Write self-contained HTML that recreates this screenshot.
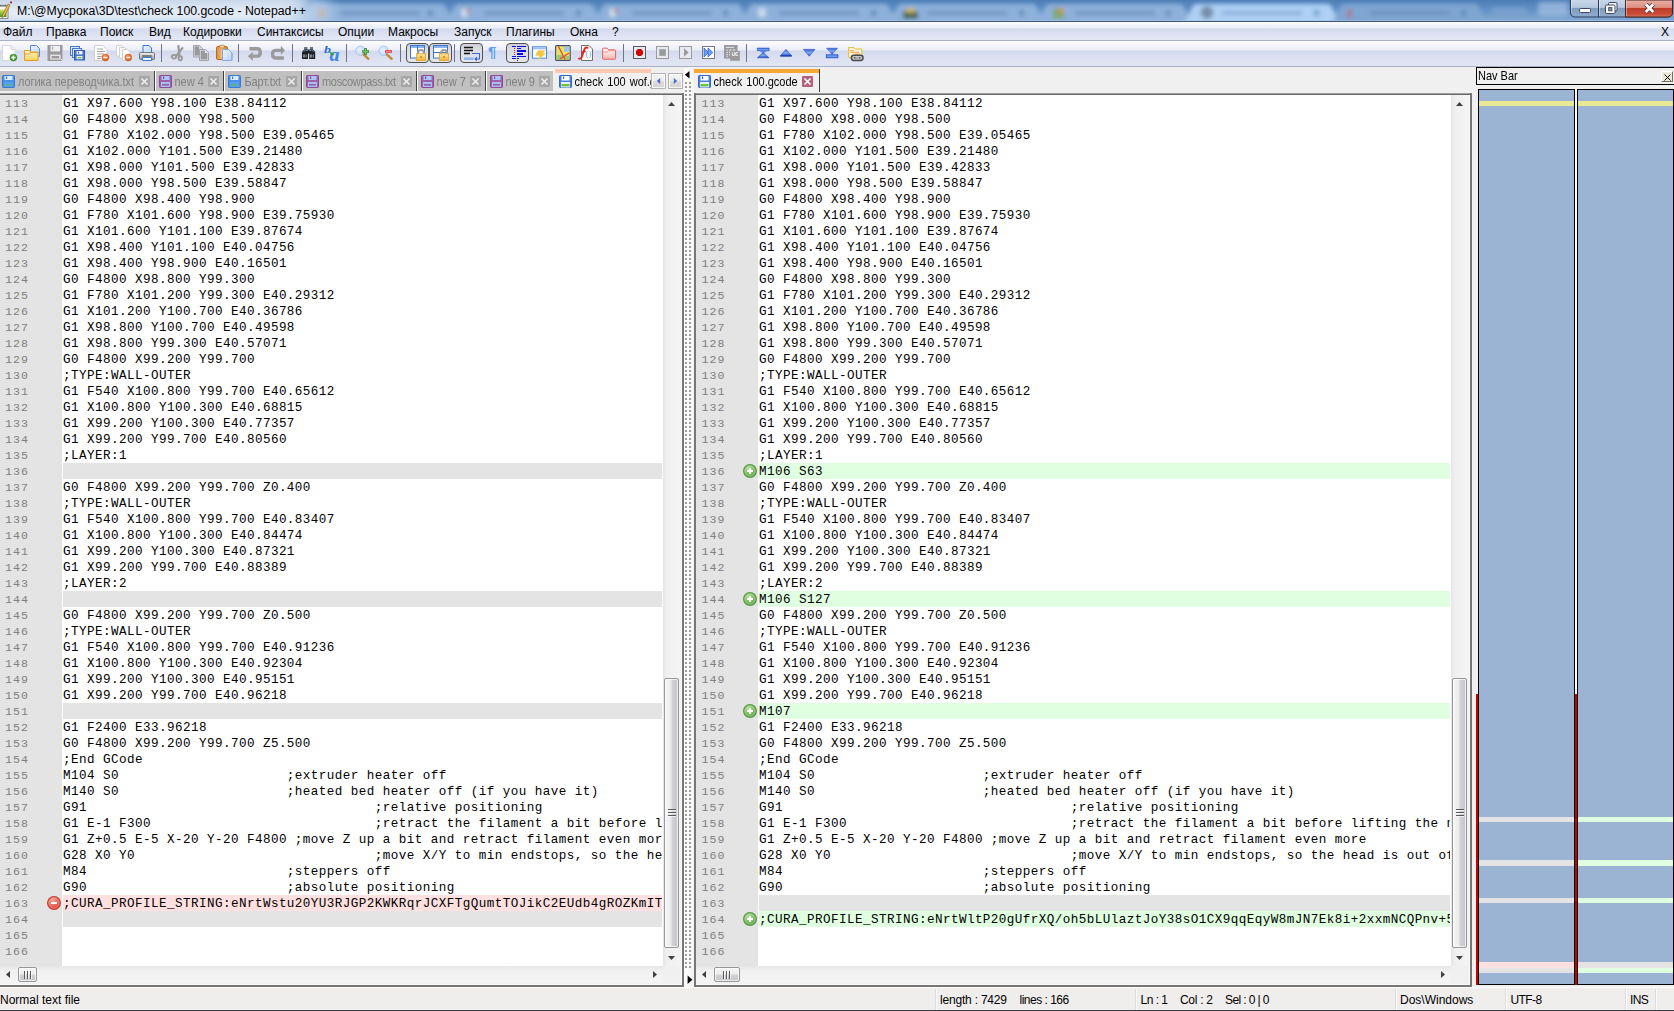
<!DOCTYPE html>
<html lang="ru">
<head>
<meta charset="utf-8">
<title>M:\@Мусрока\3D\test\check 100.gcode - Notepad++</title>
<style>
*{box-sizing:border-box;margin:0;padding:0}
html,body{width:1674px;height:1011px;overflow:hidden;background:#f0f0f0}
body{position:relative;font-family:"Liberation Sans",sans-serif;font-size:12px;color:#000}
.abs{position:absolute}
svg{display:block;overflow:visible}
/* title bar */
#title{left:0;top:0;width:1674px;height:22px;overflow:hidden;background:#5b89bd}
#ttext{left:17px;top:3px;font-size:12.3px;line-height:16px;white-space:nowrap;color:#000}
/* menu */
#menu{left:0;top:22px;width:1674px;height:19px;background:linear-gradient(180deg,#ffffff 0,#f4f6fc 12%,#e9edf8 35%,#d3d9ed 37%,#dde2f2 70%,#e3e7f5 100%);border-bottom:1px solid #a9b1c9}
#menu span{position:absolute;top:2px;line-height:16px;font-size:12px;white-space:nowrap}
/* toolbar */
#tool{left:0;top:41px;width:1674px;height:26px;background:linear-gradient(180deg,#ffffff 0,#f6f8fd 10%,#ebeef8 37%,#d3d9ed 39%,#dce1f1 70%,#e1e5f3 100%);border-bottom:1px solid #a9b1c9}
#tool .sep{position:absolute;top:3px;width:1px;height:18px;background:#6e7385}
#tool .ic{position:absolute}
#tool .pb{position:absolute;top:2px;width:23px;height:20px;border:1.3px solid #505050;border-radius:4px;background:linear-gradient(180deg,#cfd0d6 0,#dcdde2 30%,#e4e5ea 100%)}
/* tab area */
.tab{position:absolute;top:71px;height:20px;background:#c0c0c0;color:#808080;font-size:11px;line-height:14px;white-space:nowrap}
.tab.brd{border-right:1px solid #404040}
.tab .t{position:absolute;top:4px;transform:scaleY(1.1);transform-origin:0 11px}
.tab .x{position:absolute;top:5px;width:11px;height:11px;background:#a6a6a6;border-radius:1px}
.tab .fi{position:absolute;top:4px}
.tabhi{position:absolute;top:70px;height:1px;background:#fff}
.atab{position:absolute;top:69px;height:23px;background:#f0f0f0;font-size:11px;line-height:14px;white-space:nowrap;color:#000;overflow:hidden}
/* editor panes */
.pane{position:absolute;overflow:hidden;background:#fff;font-family:"Liberation Mono",monospace;font-size:12.600px;letter-spacing:.438px;line-height:16px}
.ln{position:relative;height:16px;white-space:pre}
.ln .no{position:absolute;left:0;top:0;height:16px;background:#e4e4e4;color:#808080;padding-top:1.300px;font-size:11.600px;letter-spacing:1.038px}
.ln .tx{position:absolute;top:0;height:16px;color:#000;padding-top:1px;overflow:hidden}
.ln .mk{position:absolute;top:1px}
.ln.blank .tx{background:#e4e4e4}
.ln.add .tx{background:#e0ffe0}
.ln.del .tx{background:#ffe0e0}
#lp{left:0;top:95px;width:662px;height:871px}
#lp .no{width:62px;padding-left:5px}
#lp .tx{left:63px;width:599px;padding-left:0}
#lp .mk{left:47px}
#rp{left:696px;top:95px;width:754px;height:871px}
#rp .no{width:62px;padding-left:5.500px}
#rp .tx{left:63px;width:691px;padding-left:0}
#rp .mk{left:47px}
.marg{background:#e4e4e4}
/* scrollbars */
.vs{position:absolute;width:17px;background:linear-gradient(90deg,#e6e6e6 0,#f0f0f0 25%,#f4f4f4 100%)}
.hs{position:absolute;height:17px;background:linear-gradient(180deg,#e6e6e6 0,#f0f0f0 25%,#f4f4f4 100%)}
.vth{position:absolute;left:1px;width:15px;border:1px solid #979797;border-radius:2px;background:linear-gradient(90deg,#f6f6f6 0,#ececec 45%,#d2d2d6 55%,#c4c4ca 100%);box-shadow:inset 0 0 0 1px rgba(255,255,255,.7)}
.hth{position:absolute;top:1px;height:15px;border:1px solid #979797;border-radius:2px;background:linear-gradient(180deg,#f6f6f6 0,#ececec 45%,#d2d2d6 55%,#c4c4ca 100%);box-shadow:inset 0 0 0 1px rgba(255,255,255,.7)}
.corner{position:absolute;width:17px;height:17px;background:#f0f0f0}
/* status */
#status{left:0;top:988px;width:1674px;height:23px;background:#f0eded;font-size:12px}
#status span{position:absolute;top:4px;line-height:16px;white-space:nowrap}
#status i{position:absolute;top:1px;width:2px;height:21px;background:#dedcdc;border-right:1px solid #fafafa}
</style>
</head>
<body>
<svg width="0" height="0" style="position:absolute">
<defs>
 <linearGradient id="lgBlue" x1="0" y1="0" x2="0" y2="1"><stop offset="0" stop-color="#2c56d0"/><stop offset=".5" stop-color="#7fb0f4"/><stop offset="1" stop-color="#1f49c4"/></linearGradient>
 <linearGradient id="lgFold" x1="0" y1="0" x2="0" y2="1"><stop offset="0" stop-color="#fff3c4"/><stop offset="1" stop-color="#fbd25a"/></linearGradient>
 <linearGradient id="lgPage" x1="0" y1="0" x2="1" y2="1"><stop offset="0" stop-color="#eef5ff"/><stop offset="1" stop-color="#b9d4f8"/></linearGradient>
 <linearGradient id="lgLock" x1="0" y1="0" x2="0" y2="1"><stop offset="0" stop-color="#fde9a0"/><stop offset="1" stop-color="#f2b030"/></linearGradient>
 <linearGradient id="lgClip" x1="0" y1="0" x2="1" y2="0"><stop offset="0" stop-color="#d48a38"/><stop offset=".5" stop-color="#f0c080"/><stop offset="1" stop-color="#c87828"/></linearGradient>
 <linearGradient id="lgPr" x1="0" y1="0" x2="0" y2="1"><stop offset="0" stop-color="#f4f4f4"/><stop offset="1" stop-color="#9a9a9a"/></linearGradient>
 <linearGradient id="lgRedF" x1="0" y1="0" x2="0" y2="1"><stop offset="0" stop-color="#fff"/><stop offset="1" stop-color="#f4b4b0"/></linearGradient>
 <radialGradient id="gG" cx="0.4" cy="0.3" r="0.8"><stop offset="0" stop-color="#b5e09a"/><stop offset="1" stop-color="#4f9e3a"/></radialGradient>
 <radialGradient id="gR" cx="0.4" cy="0.3" r="0.8"><stop offset="0" stop-color="#f7a59a"/><stop offset="1" stop-color="#d83226"/></radialGradient>
 <radialGradient id="gO" cx="0.4" cy="0.3" r="0.8"><stop offset="0" stop-color="#f8a060"/><stop offset="1" stop-color="#d84a10"/></radialGradient>
 <radialGradient id="gLens" cx="0.4" cy="0.4" r="0.7"><stop offset="0" stop-color="#eaf3ff"/><stop offset="1" stop-color="#b8d4f6"/></radialGradient>

 <g id="ic-plus"><circle cx="7" cy="7" r="6.300" fill="url(#gG)" stroke="#4f9a3e" stroke-width="1.300"/><circle cx="7" cy="7" r="5.200" fill="none" stroke="#fff" stroke-width=".5" opacity=".55"/><path d="M7 4v6M4 7h6" stroke="#fff" stroke-width="2" fill="none"/></g>
 <g id="ic-minus"><circle cx="7" cy="7" r="6.300" fill="url(#gR)" stroke="#cc3a30" stroke-width="1.300"/><circle cx="7" cy="7" r="5.200" fill="none" stroke="#fff" stroke-width=".5" opacity=".55"/><path d="M4 7h6" stroke="#fff" stroke-width="2" fill="none"/></g>

 <!-- toolbar icons, 16x16 -->
 <g id="t-new"><path d="M1.5 .5h8.5l4 4v11h-12.5z" fill="#fff" stroke="#d8d8d8"/><path d="M10 .5v4h4" fill="#f0f0f0" stroke="#d8d8d8"/><circle cx="12.4" cy="12.6" r="3.4" fill="#3a9a2a" stroke="#2a7a20" stroke-width=".6"/><path d="M12.4 10.4v4.4M10.2 12.6h4.4" stroke="#fff" stroke-width="1.5"/></g>
 <g id="t-open"><path d="M6.5 .5h6l3 3v8h-9z" fill="url(#lgPage)" stroke="#5a8ad8"/><path d="M.5 15.5v-10h5l1 1.5h7.5v8.5z" fill="url(#lgFold)" stroke="#e89a28"/><path d="M1 9h4.5l1-1.5h7" fill="none" stroke="#e89a28" stroke-width=".8"/></g>
 <g id="t-save"><path d="M.5 0h15v14.8l-1.2 1.2H.5z" fill="#9a9a9a"/><rect x="3.5" y=".8" width="9.5" height="5.6" fill="#f0f0f4"/><rect x="5.2" y="1.8" width="1" height="3" fill="#9a9a9a"/><rect x="3.2" y="9.6" width="10.4" height="5" fill="#e6e6ea"/><rect x="4.6" y="11" width="7.6" height="2.4" fill="#9a9a9a"/><rect x="14" y="14" width="1" height="1" fill="#fff"/></g>
 <g id="t-saveall"><rect x=".5" y="1.5" width="9" height="9" fill="#dce8fa" stroke="#4a78c8"/><rect x="2.5" y="3.5" width="9" height="9" fill="#dce8fa" stroke="#4a78c8"/><rect x="4.5" y="5.5" width="10" height="9.5" fill="#4a78c8" stroke="#2f5cb0"/><rect x="6.5" y="6" width="6" height="3.4" fill="#e8f0ff"/><rect x="8" y="6.8" width="1" height="1.6" fill="#2f5cb0"/><rect x="6.5" y="11" width="6" height="3.2" fill="#e8f0ff"/><rect x="7.5" y="12" width="4" height="1.4" fill="#78c040"/></g>
 <g id="t-close"><path d="M1.5 .5h8.5l4 4v11h-12.5z" fill="#fff" stroke="#d0d0d0"/><path d="M4 4h6M4 6.5h8M4 9h7M4 11.5h5M4 13.5h4" stroke="#a8a8a8" stroke-width="1"/><circle cx="12.4" cy="12.5" r="3.4" fill="url(#gO)" stroke="#c84810" stroke-width=".5"/><path d="M10.4 12.5h4" stroke="#fff" stroke-width="1.4"/></g>
 <g id="t-closeall"><path d="M.5 .5h5l2 2v8.5h-7z" fill="#fff" stroke="#d0d0d0"/><path d="M3.5 2.5h5l2 2v8.5h-7z" fill="#fff" stroke="#d0d0d0"/><path d="M6.5 4.5h5l2.500 2.500v8.500h-7.500z" fill="#fff" stroke="#d0d0d0"/><circle cx="12.3" cy="12.5" r="3.4" fill="url(#gO)" stroke="#c84810" stroke-width=".5"/><path d="M10.300 12.500h4" stroke="#fff" stroke-width="1.400"/></g>
 <g id="t-print"><path d="M4 .5h6l2.500 2.500v5h-8.500z" fill="url(#lgPage)" stroke="#3a78d8"/><path d="M1.500 7.500q-1 0-1 1.500v4.500q0 1 1 1h13q1 0 1-1v-4.500q0-1.500-1-1.500z" fill="url(#lgPr)" stroke="#606060" stroke-width=".8"/><rect x="3.200" y="10.200" width="9.600" height="1.600" fill="#6a6a6a"/><path d="M3.500 12.500h9v3h-9z" fill="#f4f8ff" stroke="#3a78d8"/></g>
 <g id="t-cut"><path d="M8.300 .2l1.300 11.400M13 2.400l-6.700 8.600" stroke="#9a9a9a" stroke-width="2.200" fill="none"/><ellipse cx="4" cy="11.800" rx="2.200" ry="1.800" fill="none" stroke="#9a9a9a" stroke-width="1.900"/><ellipse cx="10.300" cy="13.300" rx="1.700" ry="2.100" fill="none" stroke="#9a9a9a" stroke-width="1.900"/></g>
 <g id="t-copy"><path d="M.5 .5h6l3 3v8.500h-9z" fill="#d4d7e2" stroke="#a4a4a8"/><path d="M1.600 1.600h4.400v2.500h2.400v6.300h-6.800z" fill="#9a9a9a"/><path d="M6.500 4.500h6l3 3v8h-9z" fill="#e4e8f2" stroke="#a4a4a8"/><path d="M7.600 5.600h4.400v2.500h2.400v6.300h-6.800z" fill="#9a9a9a"/></g>
 <g id="t-paste"><rect x=".5" y="1.500" width="11" height="13" rx="1.200" fill="url(#lgClip)" stroke="#b86a20"/><rect x="3.500" y=".3" width="5" height="2.600" rx=".8" fill="#f4d8a0" stroke="#b86a20" stroke-width=".7"/><path d="M6.500 4.500h6l3.500 3.500v7.500h-9.500z" fill="url(#lgPage)" stroke="#3a70d0"/><path d="M6.500 4.500h6l3.500 3.500v7.500h-9.500z" fill="none" stroke="#fff" stroke-width=".4"/></g>
 <g id="t-undo"><path d="M2.500 3.700h8q2.700 0 2.700 3.700t-2.700 3.700h-5" fill="none" stroke="#9a9a9a" stroke-width="3.400"/><path d="M.8 11.300l5-4.200v8.600z" fill="#9a9a9a"/></g>
 <g id="t-redo"><path d="M11.500 5.400h-6q-3 0-3 3.800t3 3.800h8.400" fill="none" stroke="#9a9a9a" stroke-width="3.300"/><path d="M15 5.400l-4.200-4.600v9z" fill="#9a9a9a"/></g>
 <g id="t-find"><path d="M3.600 2h2.600v2.600h3v-2.600h2.400l.2 2.600 1.600 1.200.8 2v6.200h-6v-5.600h-1.200v5.600h-6v-6.200l.8-2 1.600-1.200z" fill="#1c1f24"/><rect x="3.600" y="2" width="2.600" height="2.400" fill="#687280"/><rect x="9.200" y="2" width="2.400" height="2.400" fill="#687280"/><path d="M2.400 6.300q2.200-1.700 4.600-.7M8.200 5.600q2.600-1 4.600.7" stroke="#6f93c0" stroke-width=".9" fill="none"/><rect x="2.300" y="9.500" width="1.400" height="3" fill="#b0b8c0"/><rect x="4.600" y="9.500" width="1.300" height="3" fill="#7c848c"/><rect x="9.300" y="9.500" width="1.400" height="3" fill="#b0b8c0"/><rect x="11.600" y="9.500" width="1.300" height="3" fill="#7c848c"/></g>
 <g id="t-zoomin"><circle cx="5.500" cy="5.800" r="4.700" fill="url(#gLens)" stroke="#a8c4ec" stroke-width=".9"/><path d="M8.600 9.400l4.800 4.400" stroke="#c08a3a" stroke-width="2.400" stroke-linecap="round"/><path d="M10.600 3v7M7.100 6.500h7" stroke="#2f8a2f" stroke-width="2.600"/><path d="M10.600 3.700v5.600M7.800 6.500h5.600" stroke="#7cc86a" stroke-width="1"/></g>
 <g id="t-zoomout"><circle cx="5.600" cy="5.800" r="4.700" fill="url(#gLens)" stroke="#a8c4ec" stroke-width=".9"/><path d="M8.800 9.400l4.800 4.400" stroke="#c08a3a" stroke-width="2.400" stroke-linecap="round"/><rect x="7" y="5" width="7" height="2.800" rx=".4" fill="#e8323c"/><rect x="7.800" y="5.800" width="5.400" height="1" fill="#f8a0a4"/></g>
 <g id="t-win1"><rect x=".5" y=".5" width="14" height="12.500" fill="#fff" stroke="#3f74cc"/><rect x="1" y="1" width="13" height="2" fill="#8ab4ee"/><path d="M7.500 1v12" stroke="#3f74cc"/></g>
 <g id="t-win2"><rect x=".5" y=".5" width="14" height="12.500" fill="#fff" stroke="#3f74cc"/><rect x="1" y="1" width="13" height="2" fill="#8ab4ee"/><path d="M1 7.500h13" stroke="#3f74cc"/></g>
 <g id="t-lock"><path d="M2.200 5.500v-1.800q0-2.700 2.800-2.700t2.800 2.700v1.800" fill="none" stroke="#9c9c9c" stroke-width="2"/><rect x=".4" y="4.800" width="9.200" height="6.600" fill="url(#lgLock)" stroke="#e8a020" stroke-width=".8"/><rect x="4.400" y="7" width="1.200" height="2" fill="#b87818"/></g>
 <g id="t-wrap"><path d="M1 1.500h9M1 4.500h9M1 7.500h6" stroke="#111" stroke-width="1.400"/><path d="M9 7.500h7.500v5.500h-3" fill="none" stroke="#3a6ad0" stroke-width="1.100"/><path d="M11.200 13l2.800-2.600v5.200z" fill="#3a6ad0"/><rect x="1" y="11.400" width="9.600" height="2.600" fill="#8ab8f4"/></g>
 <g id="t-indent"><g shape-rendering="crispEdges" fill="#0a0af8"><rect x="2" y="1" width="4" height="1"/><rect x="7" y="1" width="9" height="1"/><rect x="7" y="3" width="4" height="1"/><rect x="7" y="5" width="9" height="2"/><rect x="7" y="8" width="6" height="2"/><rect x="2" y="11" width="4" height="1"/><rect x="7" y="11" width="9" height="1"/><rect x="2" y="13" width="4" height="1"/><rect x="7" y="13" width="2" height="1"/><rect x="7" y="15" width="1" height="1"/><g fill="#f01818"><rect x="4" y="3" width="1" height="1"/><rect x="4" y="5" width="1" height="1"/><rect x="4" y="7" width="1" height="1"/><rect x="4" y="9" width="1" height="1"/></g></g></g>
 <g id="t-udl"><rect x=".5" y="1.800" width="14" height="11.400" fill="#fff" stroke="#4a86dc" stroke-width="1"/><rect x="1" y="2.300" width="13" height="2" fill="#9cc0f0"/><path d="M6 5.500h7l-2.500 3h3l-7.500 6.500 2-4.500h-4.500z" fill="#f4c23c" stroke="#f0d060" stroke-width=".5"/></g>
 <g id="t-map"><rect x=".6" y=".6" width="14.600" height="14.800" rx="1" fill="#e4e070" stroke="#4a4a70" stroke-width="1.100"/><rect x="9" y="1.600" width="5.400" height="5.400" fill="#9ec4f0"/><path d="M1.400 10h6.500v4.600h-6.500z" fill="#98cc70"/><path d="M9 11h5v3.600h-5z" fill="#98cc70"/><path d="M3.500 1.500l6.500 13M14 8l-9 6" stroke="#f04030" stroke-width="1.300"/><path d="M6 1.500l3 7 5-2" stroke="#f0f040" stroke-width=".8" fill="none"/></g>
 <g id="t-func"><path d="M3.500 .5h7.500l3.500 3.500v11.500h-11z" fill="#fffdf6" stroke="#707070"/><path d="M9.600 2.800q-2.200-.8-3.200 1.600l-2.800 8q-.8 1.600-2.600 1.200" fill="none" stroke="#e82028" stroke-width="1.900" stroke-linecap="round"/><path d="M3.200 7.200l4.600-.8" stroke="#e82028" stroke-width="1.400"/><path d="M9.600 6.500q-1 0-1 1v1.400q0 .6-.8.600.8 0 .8.600v1.400q0 1 1 1M11.400 6.500q1 0 1 1v1.400q0 .6.800.6-.8 0-.8.600v1.400q0 1-1 1" fill="none" stroke="#7ab0e0" stroke-width=".9"/></g>
 <g id="t-folder"><path d="M.6 13.500v-9.500q0-.8.800-.8h3.800l1.200 1.600h6.400q.8 0 .8.800v7.900q0 .7-.8.700h-11.400q-.8 0-.8-.7z" fill="url(#lgRedF)" stroke="#e06060" stroke-width="1"/><path d="M1.200 7h4l1-1.200h7.200" fill="none" stroke="#e88a88" stroke-width=".9"/></g>
 <g id="t-rec"><rect x=".5" y=".5" width="12" height="12" fill="#e6e8f2" stroke="#5a5a5a"/><path d="M5 3h3l2 2v3l-2 2h-3l-2-2v-3z" fill="#cc0000"/></g>
 <g id="t-stop"><rect x=".5" y=".5" width="12" height="12" fill="#e6e8f2" stroke="#9a9a9a"/><rect x="3.200" y="3.200" width="6.600" height="6.600" fill="#9a9a9a"/></g>
 <g id="t-play"><rect x=".5" y=".5" width="12" height="12" fill="#e6e8f2" stroke="#9a9a9a"/><path d="M5 2.200l4.600 4.300-4.600 4.300z" fill="#9a9a9a"/></g>
 <g id="t-multi"><rect x=".5" y=".5" width="12" height="12" fill="#fff" stroke="#7a7a7a"/><path d="M2 2l4.600 4.500-4.600 4.500z" fill="#6aa0f0" stroke="#1f55d0" stroke-width=".7"/><path d="M6 2l4.800 4.500-4.800 4.500z" fill="#6aa0f0" stroke="#1f55d0" stroke-width=".7"/></g>
 <g id="t-savemacro"><rect x="0" y="0" width="13.600" height="13.600" fill="#9a9a9a"/><path d="M1.800 2.400h8.200" stroke="#e6e8f0" stroke-width="1"/><path d="M2.400 5h1.400M5 5h2.600M8.600 5h2.600M2.400 7.400h1.400M2.400 9.600h1.400M2.400 11.800h1.400M5 7.400h1.400M5 9.600h1.400" stroke="#e6e8f0" stroke-width="1.100"/><rect x="6.200" y="6" width="9.600" height="9.800" fill="#9a9a9a"/><path d="M8.400 7.400v3h2.200v-3M14 7.600h-2.200v2.800h2.200" fill="none" stroke="#f0f0f4" stroke-width="1"/></g>
 <g id="t-first"><path d="M.2 0h12v2.600h-12z" fill="url(#lgBlue)" stroke="#1f45c0" stroke-width=".5"/><path d="M1.600 2.600h9.200l-4.600 3z" fill="#5a8eea"/><path d="M6.200 4.600l5.800 5.200h-11.600z" fill="url(#lgBlue)" stroke="#1f45c0" stroke-width=".6"/></g>
 <g id="t-up"><path d="M6 .4l5.800 6.600h-11.600z" fill="url(#lgBlue)" stroke="#1f45c0" stroke-width=".6"/><path d="M.2 7h11.600" stroke="#1436b4" stroke-width="1"/></g>
 <g id="t-down"><path d="M.4 .4h11.600l-5.800 6.800z" fill="url(#lgBlue)" stroke="#2a52c8" stroke-width=".6"/></g>
 <g id="t-last"><path d="M.6 .2h11l-5.500 6z" fill="url(#lgBlue)" stroke="#2a52c8" stroke-width=".5"/><rect x=".3" y="6.800" width="11.600" height="3" fill="#6a9cf0" stroke="#1f45c0" stroke-width=".8"/></g>
 <g id="t-flink"><path d="M.6 10.400v-9.800h5.400l1 1.400h6.800v8.400z" fill="#fff4e0" stroke="#dcc030" stroke-width="1"/><path d="M2 3.600h4M2 5.400h9M7 7.200h5" stroke="#f8b060" stroke-width="1.300"/><rect x="3.400" y="8.200" width="11.600" height="5.200" rx="2.400" fill="#c8c8c8" stroke="#484848" stroke-width="1.500"/><path d="M6 10.800h6.400" stroke="#484848" stroke-width="1.400"/><path d="M7.400 10.800h3.600" stroke="#fff" stroke-width=".8"/></g>
 <g id="t-replace"><text x="0" y="7.800" font-family="Liberation Serif, serif" font-style="italic" font-weight="bold" font-size="11" fill="#2a6ade" textLength="7" lengthAdjust="spacingAndGlyphs">b</text><text x="5.400" y="15.600" font-family="Liberation Serif, serif" font-style="italic" font-weight="bold" font-size="19" fill="#3a86ec" textLength="10" lengthAdjust="spacingAndGlyphs">a</text><path d="M5 6.200l3.200 3" stroke="#2fa040" stroke-width="1.500"/><path d="M9.800 10.600l-3.800-.6 3.200-3z" fill="#2fa040"/></g>
 <!-- tab floppy icons 13x13 -->
 <g id="f-blue"><rect x=".5" y=".5" width="12" height="12" rx=".8" fill="#4a90e8" stroke="#3878d0"/><rect x="2.500" y="1" width="8" height="4" fill="#dcecff"/><rect x="4" y="1.500" width="1.200" height="2.500" fill="#3878d0"/><rect x="2" y="7" width="9" height="5" fill="#5aa0f0"/><rect x="3" y="9" width="7" height="2" fill="#58b090"/></g>
 <g id="f-purple"><rect x=".5" y=".5" width="12" height="12" rx=".8" fill="#a060a8" stroke="#904898"/><rect x="2.500" y="1" width="8" height="4" fill="#a8c8f8"/><rect x="4" y="1.500" width="1.200" height="2.500" fill="#904898"/><rect x="2" y="7" width="9" height="5" fill="#a8c0f0"/><rect x="3" y="9" width="7" height="1.600" fill="#9060a8"/></g>
 <g id="f-active"><rect x=".5" y=".5" width="12" height="12" rx=".8" fill="#4a80e0" stroke="#3468c8"/><rect x="2.500" y="1" width="8" height="4.500" fill="#fff"/><rect x="4" y="1.500" width="1.200" height="2.500" fill="#3468c8"/><rect x="2" y="7" width="9" height="5.500" fill="#e8f0ff"/><rect x="2.500" y="9" width="8" height="2.400" fill="#70c040"/></g>
</defs>
</svg>


<!-- ===== title bar ===== -->
<div id="title" class="abs">
<svg width="1674" height="22" viewBox="0 0 1674 22">
 <defs>
  <filter id="b2" x="-5%" y="-50%" width="110%" height="200%"><feGaussianBlur stdDeviation="2.2"/></filter>
  <filter id="b6" x="-10%" y="-100%" width="120%" height="300%"><feGaussianBlur stdDeviation="7 4"/></filter>
  <linearGradient id="tgr" x1="0" y1="0" x2="0" y2="1"><stop offset="0" stop-color="#d8e860"/><stop offset="1" stop-color="#3c9a28"/></linearGradient>
  <linearGradient id="tbg" x1="0" y1="0" x2="0" y2="1"><stop offset="0" stop-color="#4c7db6"/><stop offset=".3" stop-color="#5a8ac0"/><stop offset="1" stop-color="#86acd6"/></linearGradient>
  <linearGradient id="tcl" x1="0" y1="0" x2="0" y2="1"><stop offset="0" stop-color="#eab0a4"/><stop offset=".47" stop-color="#dc8c7c"/><stop offset=".5" stop-color="#bf3e2a"/><stop offset=".8" stop-color="#c84a34"/><stop offset="1" stop-color="#d8705a"/></linearGradient>
  <linearGradient id="tbt" x1="0" y1="0" x2="0" y2="1"><stop offset="0" stop-color="#cad9ea"/><stop offset=".47" stop-color="#b4c8de"/><stop offset=".5" stop-color="#7e9bbd"/><stop offset="1" stop-color="#93adcc"/></linearGradient>
 </defs>
 <rect width="1674" height="22" fill="url(#tbg)"/>
 <g filter="url(#b2)">
  <path d="M302 24l9-18q1-2 3-2h128q2 0 3 2l9 18z" fill="#8db1da"/>
<rect x="340" y="11" width="80" height="4" fill="#5f86b4" opacity=".6"/>
<rect x="428" y="10" width="5" height="6" fill="#4f78a8" opacity=".6"/>
<path d="M446 24l9-18q1-2 3-2h132q2 0 3 2l9 18z" fill="#8db1da"/>
<rect x="484" y="11" width="80" height="4" fill="#5f86b4" opacity=".6"/>
<rect x="576" y="10" width="5" height="6" fill="#4f78a8" opacity=".6"/>
<path d="M594 24l9-18q1-2 3-2h131q2 0 3 2l9 18z" fill="#8db1da"/>
<rect x="632" y="11" width="80" height="4" fill="#5f86b4" opacity=".6"/>
<rect x="723" y="10" width="5" height="6" fill="#4f78a8" opacity=".6"/>
<path d="M741 24l9-18q1-2 3-2h132q2 0 3 2l9 18z" fill="#8db1da"/>
<rect x="779" y="11" width="80" height="4" fill="#5f86b4" opacity=".6"/>
<rect x="871" y="10" width="5" height="6" fill="#4f78a8" opacity=".6"/>
<path d="M889 24l9-18q1-2 3-2h132q2 0 3 2l9 18z" fill="#8db1da"/>
<rect x="927" y="11" width="80" height="4" fill="#5f86b4" opacity=".6"/>
<rect x="1019" y="10" width="5" height="6" fill="#4f78a8" opacity=".6"/>
<path d="M1037 24l9-18q1-2 3-2h131q2 0 3 2l9 18z" fill="#8db1da"/>
<rect x="1075" y="11" width="80" height="4" fill="#5f86b4" opacity=".6"/>
<rect x="1166" y="10" width="5" height="6" fill="#4f78a8" opacity=".6"/>
<path d="M1184 24l9-18q1-2 3-2h132q2 0 3 2l9 18z" fill="#add0f4"/>
<rect x="1222" y="11" width="80" height="4" fill="#7a9cc4" opacity=".6"/>
<rect x="1314" y="10" width="5" height="6" fill="#4f78a8" opacity=".6"/>
<path d="M1332 24l9-18q1-2 3-2h131q2 0 3 2l9 18z" fill="#7fa6d2"/>
<rect x="1370" y="11" width="80" height="4" fill="#5f86b4" opacity=".6"/>
<rect x="1461" y="10" width="5" height="6" fill="#4f78a8" opacity=".6"/>
<rect x="1538" y="2" width="30" height="14" fill="#9cbade" opacity=".8"/>
<rect x="1492" y="7" width="34" height="12" fill="#7fa4cf" opacity=".7"/>
<rect x="317" y="8" width="8" height="10" fill="#c09060" opacity=".8"/>
<rect x="462" y="9" width="5" height="8" fill="#e8f0f8" opacity=".8"/><rect x="466" y="9" width="4" height="4" fill="#d07060" opacity=".7"/>
<rect x="610" y="9" width="5" height="8" fill="#e8f0f8" opacity=".8"/><rect x="614" y="9" width="4" height="4" fill="#d07060" opacity=".7"/>
<rect x="758" y="8" width="8" height="9" fill="#dfe8f4" opacity=".7"/>
<rect x="903" y="11" width="15" height="8" fill="#3c5840" opacity=".85"/><rect x="906" y="8" width="9" height="5" fill="#d8b848" opacity=".85"/>
<rect x="1053" y="8" width="11" height="11" fill="#7aa850" opacity=".8"/><rect x="1058" y="8" width="6" height="5" fill="#d89040" opacity=".8"/>
<circle cx="1207" cy="12.500" r="6.500" fill="#6c829c" opacity=".85"/>
<rect x="1347" y="9" width="5" height="9" fill="#c06070" opacity=".6"/>
 </g>
 <g filter="url(#b6)">
  <rect x="-40" y="-8" width="345" height="36" fill="#d3e0ef" opacity=".92"/><rect x="-30" y="6" width="325" height="13" fill="#e9eff8" opacity=".9"/>
  <rect x="290" y="-2" width="40" height="26" fill="#c4d8ee" opacity=".6"/>
 </g>
 <rect x="0" y="21" width="1674" height="1" fill="#3f5676"/>
 <rect x="0" y="20" width="1674" height="1" fill="#a8c4e2" opacity=".6"/>
 <!-- window buttons -->
 <path d="M1570.500 -1v13q0 5 5 5h92q5 0 5-5v-13z" fill="url(#tbt)" stroke="#2c3c58" stroke-width="1"/>
 <path d="M1625.500 0v17h42q5 0 5-5v-12z" fill="url(#tcl)" stroke="#4a2622" stroke-width="1"/>
 <path d="M1598.500 0v17" stroke="#2c3c58"/><path d="M1599.500 0v16M1571.500 0v12.500M1626.500 0v16" stroke="#fff" opacity=".4"/>
 <rect x="1579.500" y="8.500" width="11" height="4" rx="1" fill="#fff" stroke="#3c4660" stroke-width="1"/>
 <rect x="1608.500" y="2.500" width="8.500" height="8.500" rx="1.200" fill="#f4f6f8" stroke="#3c4660" stroke-width="1"/>
 <rect x="1605.500" y="5" width="9.500" height="8.500" rx="1.200" fill="#fff" stroke="#3c4660" stroke-width="1"/>
 <rect x="1608.700" y="7.600" width="3.200" height="3.200" fill="#7e96b6" stroke="#3c4660" stroke-width=".9"/>
 <path d="M1645.800 4.200l7.400 7.800M1653.200 4.200l-7.400 7.800" stroke="#4a3038" stroke-width="4.400"/>
 <path d="M1645.800 4.200l7.400 7.800M1653.200 4.200l-7.400 7.800" stroke="#fff" stroke-width="2.700"/>
 <!-- app icon -->
 <g>
  <rect x="-3" y="6" width="11" height="12.500" fill="#f4f4f0" stroke="#6a6a6a" stroke-width=".8"/>
  <rect x="-3" y="9.500" width="9.500" height="7.500" fill="url(#tgr)"/>
  <path d="M-2 5.500h9" stroke="#555" stroke-width="1.400" stroke-dasharray="1.200 1"/>
  <path d="M2.500 15l5.500-11 2 1-5.500 11-2.600 1.500z" fill="#f0c040" stroke="#7a5a20" stroke-width=".6"/>
  <path d="M9.800 2.800l.8-1.600 1.600.8-.8 1.600z" fill="#a80808"/>
 </g>
</svg>
<div id="ttext" class="abs">M:\@Мусрока\3D\test\check 100.gcode - Notepad++</div>
</div>

<!-- ===== menu ===== -->
<div id="menu" class="abs">
 <span style="left:3px">Файл</span><span style="left:46px">Правка</span><span style="left:100px">Поиск</span><span style="left:149px">Вид</span><span style="left:183px">Кодировки</span><span style="left:257px">Синтаксисы</span><span style="left:338px">Опции</span><span style="left:388px">Макросы</span><span style="left:454px">Запуск</span><span style="left:506px">Плагины</span><span style="left:570px">Окна</span><span style="left:612px">?</span><span style="left:1661px">X</span>
</div>

<!-- ===== toolbar ===== -->
<div id="tool" class="abs">
<div class="pb" style="left:406px"></div>
<div class="pb" style="left:429px"></div>
<div class="pb" style="left:460px"></div>
<div class="pb" style="left:506px"></div>
<div class="sep" style="left:161px"></div>
<div class="sep" style="left:238px"></div>
<div class="sep" style="left:292px"></div>
<div class="sep" style="left:346px"></div>
<div class="sep" style="left:400px"></div>
<div class="sep" style="left:454px"></div>
<div class="sep" style="left:623px"></div>
<div class="sep" style="left:746px"></div>
<svg class="ic" style="left:1px;top:4px" width="16" height="16" viewBox="0 0 16 16"><use href="#t-new"/></svg>
<svg class="ic" style="left:24px;top:4px" width="16" height="16" viewBox="0 0 16 16"><use href="#t-open"/></svg>
<svg class="ic" style="left:47px;top:4px" width="16" height="16" viewBox="0 0 16 16"><use href="#t-save"/></svg>
<svg class="ic" style="left:70px;top:4px" width="16" height="16" viewBox="0 0 16 16"><use href="#t-saveall"/></svg>
<svg class="ic" style="left:93px;top:4px" width="16" height="16" viewBox="0 0 16 16"><use href="#t-close"/></svg>
<svg class="ic" style="left:116px;top:4px" width="16" height="16" viewBox="0 0 16 16"><use href="#t-closeall"/></svg>
<svg class="ic" style="left:139px;top:4px" width="16" height="16" viewBox="0 0 16 16"><use href="#t-print"/></svg>
<svg class="ic" style="left:170px;top:4px" width="16" height="16" viewBox="0 0 16 16"><use href="#t-cut"/></svg>
<svg class="ic" style="left:193px;top:4px" width="16" height="16" viewBox="0 0 16 16"><use href="#t-copy"/></svg>
<svg class="ic" style="left:216px;top:4px" width="16" height="16" viewBox="0 0 16 16"><use href="#t-paste"/></svg>
<svg class="ic" style="left:247px;top:4px" width="16" height="16" viewBox="0 0 16 16"><use href="#t-undo"/></svg>
<svg class="ic" style="left:270px;top:4px" width="16" height="16" viewBox="0 0 16 16"><use href="#t-redo"/></svg>
<svg class="ic" style="left:301px;top:4px" width="16" height="16" viewBox="0 0 16 16"><use href="#t-find"/></svg>
<svg class="ic" style="left:324px;top:4px" width="16" height="16" viewBox="0 0 16 16"><use href="#t-replace"/></svg>
<svg class="ic" style="left:355px;top:4px" width="16" height="16" viewBox="0 0 16 16"><use href="#t-zoomin"/></svg>
<svg class="ic" style="left:378px;top:4px" width="16" height="16" viewBox="0 0 16 16"><use href="#t-zoomout"/></svg>
<svg class="ic" style="left:410px;top:4px" width="16" height="16" viewBox="0 0 16 16"><use href="#t-win1"/></svg>
<svg class="ic" style="left:416px;top:8px" width="10" height="12" viewBox="0 0 10 12"><use href="#t-lock"/></svg>
<svg class="ic" style="left:433px;top:4px" width="16" height="16" viewBox="0 0 16 16"><use href="#t-win2"/></svg>
<svg class="ic" style="left:439px;top:8px" width="10" height="12" viewBox="0 0 10 12"><use href="#t-lock"/></svg>
<svg class="ic" style="left:463px;top:5px" width="17" height="16" viewBox="0 0 17 16"><use href="#t-wrap"/></svg>
<span class="abs" style="left:488px;top:2px;font:bold 15px/18px 'Liberation Sans',sans-serif;color:#5a9ef0">¶</span>
<svg class="ic" style="left:510px;top:4px" width="16" height="16" viewBox="0 0 16 16"><use href="#t-indent"/></svg>
<svg class="ic" style="left:532px;top:4px" width="16" height="16" viewBox="0 0 16 16"><use href="#t-udl"/></svg>
<svg class="ic" style="left:555px;top:4px" width="16" height="16" viewBox="0 0 16 16"><use href="#t-map"/></svg>
<svg class="ic" style="left:578px;top:4px" width="16" height="16" viewBox="0 0 16 16"><use href="#t-func"/></svg>
<svg class="ic" style="left:602px;top:4px" width="16" height="16" viewBox="0 0 16 16"><use href="#t-folder"/></svg>
<svg class="ic" style="left:633px;top:5px" width="13" height="13" viewBox="0 0 13 13"><use href="#t-rec"/></svg>
<svg class="ic" style="left:656px;top:5px" width="13" height="13" viewBox="0 0 13 13"><use href="#t-stop"/></svg>
<svg class="ic" style="left:679px;top:5px" width="13" height="13" viewBox="0 0 13 13"><use href="#t-play"/></svg>
<svg class="ic" style="left:702px;top:5px" width="13" height="13" viewBox="0 0 13 13"><use href="#t-multi"/></svg>
<svg class="ic" style="left:724px;top:4px" width="16" height="16" viewBox="0 0 16 16"><use href="#t-savemacro"/></svg>
<svg class="ic" style="left:757px;top:7px" width="12" height="10" viewBox="0 0 12 10"><use href="#t-first"/></svg>
<svg class="ic" style="left:780px;top:7.6px" width="12" height="8" viewBox="0 0 12 8"><use href="#t-up"/></svg>
<svg class="ic" style="left:803px;top:7.6px" width="12" height="8" viewBox="0 0 12 8"><use href="#t-down"/></svg>
<svg class="ic" style="left:826px;top:7px" width="12" height="10" viewBox="0 0 12 10"><use href="#t-last"/></svg>
<svg class="ic" style="left:848px;top:6px" width="16" height="14" viewBox="0 0 16 14"><use href="#t-flink"/></svg>
</div>

<!-- ===== tabs ===== -->
<div class="tabhi" style="left:0;width:553px"></div>
<div class="tab brd" style="left:0px;width:155px"><svg class="fi" style="left:2px" width="13" height="13" viewBox="0 0 13 13"><use href="#f-blue"/></svg><span class="t" style="left:18px;letter-spacing:-0.05px">логика переводчика.txt</span><span class="x" style="left:139px"><svg width="11" height="11" viewBox="0 0 11 11"><path d="M2.500 2.500l6 6M8.500 2.500l-6 6" stroke="#eeeeee" stroke-width="1.600"/></svg></span></div>
<div class="tab brd" style="left:156px;width:68px"><svg class="fi" style="left:3px" width="13" height="13" viewBox="0 0 13 13"><use href="#f-purple"/></svg><span class="t" style="left:18.5px;letter-spacing:0px">new 4</span><span class="x" style="left:52px"><svg width="11" height="11" viewBox="0 0 11 11"><path d="M2.500 2.500l6 6M8.500 2.500l-6 6" stroke="#eeeeee" stroke-width="1.600"/></svg></span></div>
<div class="tab brd" style="left:225px;width:77px"><svg class="fi" style="left:3px" width="13" height="13" viewBox="0 0 13 13"><use href="#f-blue"/></svg><span class="t" style="left:19.4px;letter-spacing:-0.14px">Барт.txt</span><span class="x" style="left:61px"><svg width="11" height="11" viewBox="0 0 11 11"><path d="M2.500 2.500l6 6M8.500 2.500l-6 6" stroke="#eeeeee" stroke-width="1.600"/></svg></span></div>
<div class="tab brd" style="left:303px;width:114px"><svg class="fi" style="left:3px" width="13" height="13" viewBox="0 0 13 13"><use href="#f-purple"/></svg><span class="t" style="left:19px;letter-spacing:-0.32px">moscowpass.txt</span><span class="x" style="left:98px"><svg width="11" height="11" viewBox="0 0 11 11"><path d="M2.500 2.500l6 6M8.500 2.500l-6 6" stroke="#eeeeee" stroke-width="1.600"/></svg></span></div>
<div class="tab brd" style="left:418px;width:68px"><svg class="fi" style="left:3px" width="13" height="13" viewBox="0 0 13 13"><use href="#f-purple"/></svg><span class="t" style="left:18.5px;letter-spacing:0px">new 7</span><span class="x" style="left:52px"><svg width="11" height="11" viewBox="0 0 11 11"><path d="M2.500 2.500l6 6M8.500 2.500l-6 6" stroke="#eeeeee" stroke-width="1.600"/></svg></span></div>
<div class="tab " style="left:487px;width:66px"><svg class="fi" style="left:3px" width="13" height="13" viewBox="0 0 13 13"><use href="#f-purple"/></svg><span class="t" style="left:18.5px;letter-spacing:0px">new 9</span><span class="x" style="left:52px"><svg width="11" height="11" viewBox="0 0 11 11"><path d="M2.500 2.500l6 6M8.500 2.500l-6 6" stroke="#eeeeee" stroke-width="1.600"/></svg></span></div>
<div class="abs" style="left:155px;top:70px;width:1px;height:21px;background:#fff"></div>
<div class="abs" style="left:224px;top:70px;width:1px;height:21px;background:#fff"></div>
<div class="abs" style="left:302px;top:70px;width:1px;height:21px;background:#fff"></div>
<div class="abs" style="left:417px;top:70px;width:1px;height:21px;background:#fff"></div>
<div class="abs" style="left:486px;top:70px;width:1px;height:21px;background:#fff"></div>
<div class="atab" style="left:554px;width:97px"><div class="abs" style="left:1px;top:0;width:96px;height:4px;background:#ffc9b0"></div><svg class="abs" style="left:5px;top:6px" width="13" height="13" viewBox="0 0 13 13"><use href="#f-active"/></svg><span class="abs" style="left:20.500px;top:6px;word-spacing:1px;transform:scaleY(1.1);transform-origin:0 11px">check 100 wof.gcode</span></div>
<div class="abs" style="left:651px;top:73px;width:15px;height:16px;border:1px solid #b2b2b2;background:linear-gradient(180deg,#f4f4f4 0,#ebebeb 50%,#dcdcdc 52%,#d4d4d4 100%);box-shadow:inset 0 0 0 1px rgba(255,255,255,.8)"><svg class="abs" style="left:3px;top:3px" width="7" height="8"><path d="M5.200 1l-3.400 3 3.400 3z" fill="#4a6ad0"/></svg></div>
<div class="abs" style="left:668px;top:73px;width:15px;height:16px;border:1px solid #b2b2b2;background:linear-gradient(180deg,#f4f4f4 0,#ebebeb 50%,#dcdcdc 52%,#d4d4d4 100%);box-shadow:inset 0 0 0 1px rgba(255,255,255,.8)"><svg class="abs" style="left:3px;top:3px" width="7" height="8"><path d="M1.800 1l3.400 3-3.400 3z" fill="#4a6ad0"/></svg></div>
<div class="atab" style="left:694px;width:126px;border-right:1px solid #404040"><div class="abs" style="left:0;top:0;width:125px;height:4px;background:#faa632"></div><svg class="abs" style="left:4px;top:6px" width="13" height="13" viewBox="0 0 13 13"><use href="#f-active"/></svg><span class="abs" style="left:19.500px;top:6px;word-spacing:1px;transform:scaleY(1.1);transform-origin:0 11px">check 100.gcode</span><span class="abs" style="left:108px;top:7px;width:11px;height:11px;background:#b0627e;border-radius:1px"><svg width="11" height="11" viewBox="0 0 11 11"><path d="M2.500 2.500l6 6M8.500 2.500l-6 6" stroke="#fff" stroke-width="1.600"/></svg></span></div>

<!-- ===== editor frames ===== -->
<div class="abs" style="left:0;top:93px;width:684px;height:1px;background:#a0a0a0"></div>
<div class="abs" style="left:0;top:94px;width:684px;height:1px;background:#696969"></div>
<div class="abs" style="left:680px;top:95px;width:2px;height:889px;background:linear-gradient(90deg,#ececec,#ffffff)"></div>
<div class="abs" style="left:682px;top:93px;width:2px;height:893px;background:#767676"></div>
<div class="abs" style="left:0;top:983px;width:682px;height:2px;background:linear-gradient(180deg,#ececec,#ffffff)"></div>
<div class="abs" style="left:0;top:985px;width:1472px;height:2px;background:#767676"></div>
<div class="abs" style="left:0;top:987px;width:1674px;height:1px;background:#fdfdfd"></div>
<div class="abs" style="left:684px;top:68px;width:10px;height:919px;background:linear-gradient(90deg,#fbfbfb 0,#f8f8f8 60%,#f2f2f2 100%)"></div>

<div class="abs" style="left:694px;top:93px;width:778px;height:1px;background:#a0a0a0"></div>
<div class="abs" style="left:694px;top:94px;width:778px;height:1px;background:#696969"></div>
<div class="abs" style="left:694px;top:93px;width:2px;height:892px;background:#767676"></div>
<div class="abs" style="left:1468px;top:95px;width:2px;height:889px;background:linear-gradient(90deg,#ececec,#ffffff)"></div>
<div class="abs" style="left:1470px;top:93px;width:2px;height:893px;background:#767676"></div>
<div class="abs" style="left:696px;top:983px;width:774px;height:2px;background:linear-gradient(180deg,#ececec,#ffffff)"></div>

<!-- splitter -->
<svg class="abs" style="left:684px;top:68px" width="10" height="918" viewBox="0 0 10 918">
 <defs><pattern id="dots" x="1" y="14" width="4" height="4" patternUnits="userSpaceOnUse"><rect x="0" y="0" width="2" height="2" fill="#9c9c9c"/><rect x="2" y="2" width="1" height="1" fill="#fff" opacity=".6"/></pattern></defs>
 <rect x="1" y="14" width="8" height="886" fill="url(#dots)"/>
 <path d="M5.500 3v7.500l-4.600-3.750z" fill="#000"/>
 <path d="M3.600 907.500v8.500l4.800-4.250z" fill="#000"/>
</svg>

<!-- ===== panes ===== -->
<div id="lp" class="pane">
<div class="ln "><span class="no">113</span><span class="tx">G1 X97.600 Y98.100 E38.84112</span></div>
<div class="ln "><span class="no">114</span><span class="tx">G0 F4800 X98.000 Y98.500</span></div>
<div class="ln "><span class="no">115</span><span class="tx">G1 F780 X102.000 Y98.500 E39.05465</span></div>
<div class="ln "><span class="no">116</span><span class="tx">G1 X102.000 Y101.500 E39.21480</span></div>
<div class="ln "><span class="no">117</span><span class="tx">G1 X98.000 Y101.500 E39.42833</span></div>
<div class="ln "><span class="no">118</span><span class="tx">G1 X98.000 Y98.500 E39.58847</span></div>
<div class="ln "><span class="no">119</span><span class="tx">G0 F4800 X98.400 Y98.900</span></div>
<div class="ln "><span class="no">120</span><span class="tx">G1 F780 X101.600 Y98.900 E39.75930</span></div>
<div class="ln "><span class="no">121</span><span class="tx">G1 X101.600 Y101.100 E39.87674</span></div>
<div class="ln "><span class="no">122</span><span class="tx">G1 X98.400 Y101.100 E40.04756</span></div>
<div class="ln "><span class="no">123</span><span class="tx">G1 X98.400 Y98.900 E40.16501</span></div>
<div class="ln "><span class="no">124</span><span class="tx">G0 F4800 X98.800 Y99.300</span></div>
<div class="ln "><span class="no">125</span><span class="tx">G1 F780 X101.200 Y99.300 E40.29312</span></div>
<div class="ln "><span class="no">126</span><span class="tx">G1 X101.200 Y100.700 E40.36786</span></div>
<div class="ln "><span class="no">127</span><span class="tx">G1 X98.800 Y100.700 E40.49598</span></div>
<div class="ln "><span class="no">128</span><span class="tx">G1 X98.800 Y99.300 E40.57071</span></div>
<div class="ln "><span class="no">129</span><span class="tx">G0 F4800 X99.200 Y99.700</span></div>
<div class="ln "><span class="no">130</span><span class="tx">;TYPE:WALL-OUTER</span></div>
<div class="ln "><span class="no">131</span><span class="tx">G1 F540 X100.800 Y99.700 E40.65612</span></div>
<div class="ln "><span class="no">132</span><span class="tx">G1 X100.800 Y100.300 E40.68815</span></div>
<div class="ln "><span class="no">133</span><span class="tx">G1 X99.200 Y100.300 E40.77357</span></div>
<div class="ln "><span class="no">134</span><span class="tx">G1 X99.200 Y99.700 E40.80560</span></div>
<div class="ln "><span class="no">135</span><span class="tx">;LAYER:1</span></div>
<div class="ln blank"><span class="no">136</span><span class="tx"></span></div>
<div class="ln "><span class="no">137</span><span class="tx">G0 F4800 X99.200 Y99.700 Z0.400</span></div>
<div class="ln "><span class="no">138</span><span class="tx">;TYPE:WALL-OUTER</span></div>
<div class="ln "><span class="no">139</span><span class="tx">G1 F540 X100.800 Y99.700 E40.83407</span></div>
<div class="ln "><span class="no">140</span><span class="tx">G1 X100.800 Y100.300 E40.84474</span></div>
<div class="ln "><span class="no">141</span><span class="tx">G1 X99.200 Y100.300 E40.87321</span></div>
<div class="ln "><span class="no">142</span><span class="tx">G1 X99.200 Y99.700 E40.88389</span></div>
<div class="ln "><span class="no">143</span><span class="tx">;LAYER:2</span></div>
<div class="ln blank"><span class="no">144</span><span class="tx"></span></div>
<div class="ln "><span class="no">145</span><span class="tx">G0 F4800 X99.200 Y99.700 Z0.500</span></div>
<div class="ln "><span class="no">146</span><span class="tx">;TYPE:WALL-OUTER</span></div>
<div class="ln "><span class="no">147</span><span class="tx">G1 F540 X100.800 Y99.700 E40.91236</span></div>
<div class="ln "><span class="no">148</span><span class="tx">G1 X100.800 Y100.300 E40.92304</span></div>
<div class="ln "><span class="no">149</span><span class="tx">G1 X99.200 Y100.300 E40.95151</span></div>
<div class="ln "><span class="no">150</span><span class="tx">G1 X99.200 Y99.700 E40.96218</span></div>
<div class="ln blank"><span class="no">151</span><span class="tx"></span></div>
<div class="ln "><span class="no">152</span><span class="tx">G1 F2400 E33.96218</span></div>
<div class="ln "><span class="no">153</span><span class="tx">G0 F4800 X99.200 Y99.700 Z5.500</span></div>
<div class="ln "><span class="no">154</span><span class="tx">;End GCode</span></div>
<div class="ln "><span class="no">155</span><span class="tx">M104 S0                     ;extruder heater off</span></div>
<div class="ln "><span class="no">156</span><span class="tx">M140 S0                     ;heated bed heater off (if you have it)</span></div>
<div class="ln "><span class="no">157</span><span class="tx">G91                                    ;relative positioning</span></div>
<div class="ln "><span class="no">158</span><span class="tx">G1 E-1 F300                            ;retract the filament a bit before lifting the nozzle, to release some of the pressure</span></div>
<div class="ln "><span class="no">159</span><span class="tx">G1 Z+0.5 E-5 X-20 Y-20 F4800 ;move Z up a bit and retract filament even more</span></div>
<div class="ln "><span class="no">160</span><span class="tx">G28 X0 Y0                              ;move X/Y to min endstops, so the head is out of the way</span></div>
<div class="ln "><span class="no">161</span><span class="tx">M84                         ;steppers off</span></div>
<div class="ln "><span class="no">162</span><span class="tx">G90                         ;absolute positioning</span></div>
<div class="ln del"><span class="no">163</span><svg class="mk" width="14" height="14" viewBox="0 0 14 14"><use href="#ic-minus"/></svg><span class="tx">;CURA_PROFILE_STRING:eNrtWstu20YU3RJGP2KWKRqrJCXFTgQumtTOJikC2EUdb4gROZKmITA0</span></div>
<div class="ln blank"><span class="no">164</span><span class="tx"></span></div>
<div class="ln "><span class="no">165</span><span class="tx"></span></div>
<div class="ln "><span class="no">166</span><span class="tx"></span></div>
<div class="abs marg" style="left:0;top:864px;width:62px;height:7px"></div>
</div>
<div id="rp" class="pane">
<div class="ln "><span class="no">113</span><span class="tx">G1 X97.600 Y98.100 E38.84112</span></div>
<div class="ln "><span class="no">114</span><span class="tx">G0 F4800 X98.000 Y98.500</span></div>
<div class="ln "><span class="no">115</span><span class="tx">G1 F780 X102.000 Y98.500 E39.05465</span></div>
<div class="ln "><span class="no">116</span><span class="tx">G1 X102.000 Y101.500 E39.21480</span></div>
<div class="ln "><span class="no">117</span><span class="tx">G1 X98.000 Y101.500 E39.42833</span></div>
<div class="ln "><span class="no">118</span><span class="tx">G1 X98.000 Y98.500 E39.58847</span></div>
<div class="ln "><span class="no">119</span><span class="tx">G0 F4800 X98.400 Y98.900</span></div>
<div class="ln "><span class="no">120</span><span class="tx">G1 F780 X101.600 Y98.900 E39.75930</span></div>
<div class="ln "><span class="no">121</span><span class="tx">G1 X101.600 Y101.100 E39.87674</span></div>
<div class="ln "><span class="no">122</span><span class="tx">G1 X98.400 Y101.100 E40.04756</span></div>
<div class="ln "><span class="no">123</span><span class="tx">G1 X98.400 Y98.900 E40.16501</span></div>
<div class="ln "><span class="no">124</span><span class="tx">G0 F4800 X98.800 Y99.300</span></div>
<div class="ln "><span class="no">125</span><span class="tx">G1 F780 X101.200 Y99.300 E40.29312</span></div>
<div class="ln "><span class="no">126</span><span class="tx">G1 X101.200 Y100.700 E40.36786</span></div>
<div class="ln "><span class="no">127</span><span class="tx">G1 X98.800 Y100.700 E40.49598</span></div>
<div class="ln "><span class="no">128</span><span class="tx">G1 X98.800 Y99.300 E40.57071</span></div>
<div class="ln "><span class="no">129</span><span class="tx">G0 F4800 X99.200 Y99.700</span></div>
<div class="ln "><span class="no">130</span><span class="tx">;TYPE:WALL-OUTER</span></div>
<div class="ln "><span class="no">131</span><span class="tx">G1 F540 X100.800 Y99.700 E40.65612</span></div>
<div class="ln "><span class="no">132</span><span class="tx">G1 X100.800 Y100.300 E40.68815</span></div>
<div class="ln "><span class="no">133</span><span class="tx">G1 X99.200 Y100.300 E40.77357</span></div>
<div class="ln "><span class="no">134</span><span class="tx">G1 X99.200 Y99.700 E40.80560</span></div>
<div class="ln "><span class="no">135</span><span class="tx">;LAYER:1</span></div>
<div class="ln add"><span class="no">136</span><svg class="mk" width="14" height="14" viewBox="0 0 14 14"><use href="#ic-plus"/></svg><span class="tx">M106 S63</span></div>
<div class="ln "><span class="no">137</span><span class="tx">G0 F4800 X99.200 Y99.700 Z0.400</span></div>
<div class="ln "><span class="no">138</span><span class="tx">;TYPE:WALL-OUTER</span></div>
<div class="ln "><span class="no">139</span><span class="tx">G1 F540 X100.800 Y99.700 E40.83407</span></div>
<div class="ln "><span class="no">140</span><span class="tx">G1 X100.800 Y100.300 E40.84474</span></div>
<div class="ln "><span class="no">141</span><span class="tx">G1 X99.200 Y100.300 E40.87321</span></div>
<div class="ln "><span class="no">142</span><span class="tx">G1 X99.200 Y99.700 E40.88389</span></div>
<div class="ln "><span class="no">143</span><span class="tx">;LAYER:2</span></div>
<div class="ln add"><span class="no">144</span><svg class="mk" width="14" height="14" viewBox="0 0 14 14"><use href="#ic-plus"/></svg><span class="tx">M106 S127</span></div>
<div class="ln "><span class="no">145</span><span class="tx">G0 F4800 X99.200 Y99.700 Z0.500</span></div>
<div class="ln "><span class="no">146</span><span class="tx">;TYPE:WALL-OUTER</span></div>
<div class="ln "><span class="no">147</span><span class="tx">G1 F540 X100.800 Y99.700 E40.91236</span></div>
<div class="ln "><span class="no">148</span><span class="tx">G1 X100.800 Y100.300 E40.92304</span></div>
<div class="ln "><span class="no">149</span><span class="tx">G1 X99.200 Y100.300 E40.95151</span></div>
<div class="ln "><span class="no">150</span><span class="tx">G1 X99.200 Y99.700 E40.96218</span></div>
<div class="ln add"><span class="no">151</span><svg class="mk" width="14" height="14" viewBox="0 0 14 14"><use href="#ic-plus"/></svg><span class="tx">M107</span></div>
<div class="ln "><span class="no">152</span><span class="tx">G1 F2400 E33.96218</span></div>
<div class="ln "><span class="no">153</span><span class="tx">G0 F4800 X99.200 Y99.700 Z5.500</span></div>
<div class="ln "><span class="no">154</span><span class="tx">;End GCode</span></div>
<div class="ln "><span class="no">155</span><span class="tx">M104 S0                     ;extruder heater off</span></div>
<div class="ln "><span class="no">156</span><span class="tx">M140 S0                     ;heated bed heater off (if you have it)</span></div>
<div class="ln "><span class="no">157</span><span class="tx">G91                                    ;relative positioning</span></div>
<div class="ln "><span class="no">158</span><span class="tx">G1 E-1 F300                            ;retract the filament a bit before lifting the nozzle, to release some of the pressure</span></div>
<div class="ln "><span class="no">159</span><span class="tx">G1 Z+0.5 E-5 X-20 Y-20 F4800 ;move Z up a bit and retract filament even more</span></div>
<div class="ln "><span class="no">160</span><span class="tx">G28 X0 Y0                              ;move X/Y to min endstops, so the head is out of the way</span></div>
<div class="ln "><span class="no">161</span><span class="tx">M84                         ;steppers off</span></div>
<div class="ln "><span class="no">162</span><span class="tx">G90                         ;absolute positioning</span></div>
<div class="ln blank"><span class="no">163</span><span class="tx"></span></div>
<div class="ln add"><span class="no">164</span><svg class="mk" width="14" height="14" viewBox="0 0 14 14"><use href="#ic-plus"/></svg><span class="tx">;CURA_PROFILE_STRING:eNrtWltP20gUfrXQ/oh5bLUlaztJoY38sO1CX9qqEqyW8mJN7Ek8i+2xxmNCQPnv+5bB</span></div>
<div class="ln "><span class="no">165</span><span class="tx"></span></div>
<div class="ln "><span class="no">166</span><span class="tx"></span></div>
<div class="abs marg" style="left:0;top:864px;width:62px;height:7px"></div>
</div>

<!-- scrollbars left -->
<div class="vs" style="left:663px;top:95px;height:871px">
 <svg class="abs" style="left:5px;top:7px" width="7" height="4"><path d="M0 4l3.500-4 3.500 4z" fill="#404040"/></svg>
 <div class="vth" style="top:583px;height:270px"><svg class="abs" style="left:3px;top:130px" width="8" height="8"><path d="M0 .5h8M0 3.500h8M0 6.500h8" stroke="#5a5a5a" stroke-width="1"/><path d="M0 1.500h8M0 4.500h8M0 7.500h8" stroke="#fff" stroke-width="1" opacity=".7"/></svg></div>
 <svg class="abs" style="left:5px;top:861px" width="7" height="4"><path d="M0 0l3.500 4 3.500-4z" fill="#404040"/></svg>
</div>
<div class="hs" style="left:0;top:966px;width:663px">
 <svg class="abs" style="left:6px;top:5px" width="4" height="7"><path d="M4 0l-4 3.500 4 3.500z" fill="#404040"/></svg>
 <div class="hth" style="left:18px;width:19px"><svg class="abs" style="left:5px;top:3px" width="8" height="8"><path d="M.5 0v8M3.500 0v8M6.500 0v8" stroke="#5a5a5a" stroke-width="1"/><path d="M1.500 0v8M4.500 0v8M7.500 0v8" stroke="#fff" stroke-width="1" opacity=".7"/></svg></div>
 <svg class="abs" style="left:653px;top:5px" width="4" height="7"><path d="M0 0l4 3.500-4 3.500z" fill="#404040"/></svg>
</div>
<div class="corner" style="left:663px;top:966px"></div>
<div class="abs" style="left:662px;top:95px;width:1px;height:871px;background:#fff"></div>

<!-- scrollbars right -->
<div class="vs" style="left:1451px;top:95px;height:871px">
 <svg class="abs" style="left:5px;top:7px" width="7" height="4"><path d="M0 4l3.500-4 3.500 4z" fill="#404040"/></svg>
 <div class="vth" style="top:583px;height:270px"><svg class="abs" style="left:3px;top:130px" width="8" height="8"><path d="M0 .5h8M0 3.500h8M0 6.500h8" stroke="#5a5a5a" stroke-width="1"/><path d="M0 1.500h8M0 4.500h8M0 7.500h8" stroke="#fff" stroke-width="1" opacity=".7"/></svg></div>
 <svg class="abs" style="left:5px;top:861px" width="7" height="4"><path d="M0 0l3.500 4 3.500-4z" fill="#404040"/></svg>
</div>
<div class="hs" style="left:696px;top:966px;width:755px">
 <svg class="abs" style="left:6px;top:5px" width="4" height="7"><path d="M4 0l-4 3.500 4 3.500z" fill="#404040"/></svg>
 <div class="hth" style="left:18px;width:26px"><svg class="abs" style="left:8px;top:3px" width="8" height="8"><path d="M.5 0v8M3.500 0v8M6.500 0v8" stroke="#5a5a5a" stroke-width="1"/><path d="M1.500 0v8M4.500 0v8M7.500 0v8" stroke="#fff" stroke-width="1" opacity=".7"/></svg></div>
 <svg class="abs" style="left:745px;top:5px" width="4" height="7"><path d="M0 0l4 3.500-4 3.500z" fill="#404040"/></svg>
</div>
<div class="corner" style="left:1451px;top:966px;width:17px"></div>
<div class="abs" style="left:1450px;top:95px;width:1px;height:871px;background:#fff"></div>

<!-- ===== nav bar ===== -->
<div class="abs" style="left:1476px;top:67px;width:200px;height:18px;border:1px solid #000;background:#f0f0f0"></div>
<div class="abs" style="left:1478px;top:69px;font-size:11px;line-height:14px;color:#000;transform:scaleY(1.12);transform-origin:0 11px">Nav Bar</div>
<div class="abs" style="left:1661px;top:71px;width:12px;height:11px;background:#ece9d8;border:1px solid;border-color:#fff #716f64 #716f64 #fff"><svg class="abs" style="left:2px;top:1.500px" width="7" height="7"><path d="M.5 .5l6 6M6.500 .5l-6 6" stroke="#000" stroke-width="1"/></svg></div>
<div class="abs" style="left:1478px;top:89px;width:97px;height:896px;border:1px solid #000;background:#9bb4d3;overflow:hidden">
 <div class="abs" style="left:0;top:11px;width:95px;height:5px;background:#e9e995"></div>
 <div class="abs" style="left:0;top:727px;width:95px;height:5px;background:#e4e4e4"></div>
 <div class="abs" style="left:0;top:770px;width:95px;height:6px;background:#e4e4e4"></div>
 <div class="abs" style="left:0;top:808px;width:95px;height:5px;background:#e4e4e4"></div>
 <div class="abs" style="left:0;top:872px;width:95px;height:6px;background:#ffe0e0"></div>
 <div class="abs" style="left:0;top:878px;width:95px;height:5px;background:#e4e4e4"></div>
</div>
<div class="abs" style="left:1577px;top:89px;width:97px;height:896px;border:1px solid #000;background:#9bb4d3;overflow:hidden">
 <div class="abs" style="left:0;top:11px;width:95px;height:5px;background:#e9e995"></div>
 <div class="abs" style="left:0;top:727px;width:95px;height:5px;background:#e0ffe0"></div>
 <div class="abs" style="left:0;top:770px;width:95px;height:6px;background:#e0ffe0"></div>
 <div class="abs" style="left:0;top:808px;width:95px;height:5px;background:#e0ffe0"></div>
 <div class="abs" style="left:0;top:872px;width:95px;height:6px;background:#e4e4e4"></div>
 <div class="abs" style="left:0;top:878px;width:95px;height:5px;background:#e0ffe0"></div>
</div>
<div class="abs" style="left:1575px;top:89px;width:2px;height:605px;background:#fff"></div>
<div class="abs" style="left:1476px;top:694px;width:2px;height:291px;background:#c80000"></div>
<div class="abs" style="left:1575px;top:694px;width:2px;height:291px;background:#c80000"></div>

<!-- ===== status ===== -->
<div id="status" class="abs">
 <span style="left:0px">Normal text file</span>
 <i style="left:935px"></i>
 <span style="left:940px;letter-spacing:-.2px">length : 7429</span><span style="left:1019.500px;letter-spacing:-.5px">lines : 166</span>
 <i style="left:1135px"></i>
 <span style="left:1140.500px;letter-spacing:-.5px">Ln : 1</span><span style="left:1180px;letter-spacing:-.3px">Col : 2</span><span style="left:1225px;letter-spacing:-.6px">Sel : 0 | 0</span>
 <i style="left:1395px"></i>
 <span style="left:1400px">Dos\Windows</span>
 <i style="left:1505px"></i>
 <span style="left:1510.500px;letter-spacing:-.6px">UTF-8</span>
 <i style="left:1625px"></i>
 <span style="left:1630px;letter-spacing:-.6px">INS</span>
 <i style="left:1655px"></i>
</div>
<div class="abs" style="left:0;top:1010px;width:1674px;height:1px;background:#3a3a48"></div>
</body>
</html>
